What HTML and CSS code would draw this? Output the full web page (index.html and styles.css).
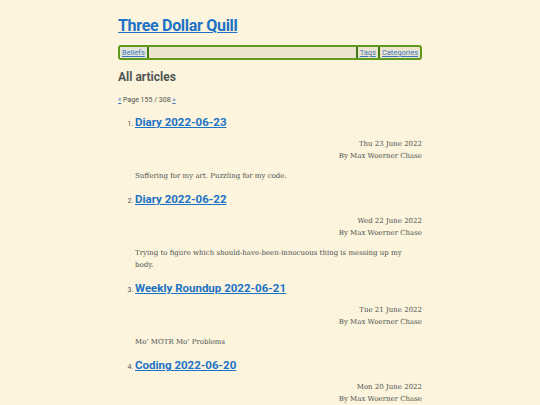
FILE: index.html
```html
<!DOCTYPE html>
<html>
<head>
<meta charset="utf-8">
<link rel="stylesheet" href="styles.css">
</head>
<body>
<div class="page">
  <header class="site-header">
    <h1 class="site-title"><a href="#">Three Dollar Quill</a></h1>
    <nav class="nav">
      <a class="nav-link nav-first" href="#">Beliefs</a>
      <span class="nav-spacer"></span>
      <a class="nav-link nav-sep" href="#">Tags</a>
      <a class="nav-link nav-sep" href="#">Categories</a>
    </nav>
  </header>
  <main>
    <h2 class="section-title">All articles</h2>
    <p class="pager"><a href="#">«</a> Page 155 / 308 <a href="#">»</a></p>
    <ol class="articles" start="1">
      <li class="article">
        <h3 class="article-title"><a href="#">Diary 2022-06-23</a></h3>
        <div class="meta">
          <div>Thu 23 June 2022</div>
          <div>By Max Woerner Chase</div>
        </div>
        <p class="summary">Suffering for my art. Puzzling for my code.</p>
      </li>
      <li class="article">
        <h3 class="article-title"><a href="#">Diary 2022-06-22</a></h3>
        <div class="meta">
          <div>Wed 22 June 2022</div>
          <div>By Max Woerner Chase</div>
        </div>
        <p class="summary">Trying to figure which should-have-been-innocuous thing is messing up my body.</p>
      </li>
      <li class="article">
        <h3 class="article-title"><a href="#">Weekly Roundup 2022-06-21</a></h3>
        <div class="meta">
          <div>Tue 21 June 2022</div>
          <div>By Max Woerner Chase</div>
        </div>
        <p class="summary">Mo’ MOTR Mo’ Problems</p>
      </li>
      <li class="article">
        <h3 class="article-title"><a href="#">Coding 2022-06-20</a></h3>
        <div class="meta">
          <div>Mon 20 June 2022</div>
          <div>By Max Woerner Chase</div>
        </div>
      </li>
    </ol>
  </main>
</div>
</body>
</html>
```

FILE: styles.css
```css
html, body {
  margin: 0;
  padding: 0;
  background: #fcf4dc;
}
body {
  font-family: "DejaVu Serif", serif;
  color: #4e5252;
}
.page {
  width: 304px;
  margin: 0 auto;
  padding-top: 15px;
}
.site-title {
  margin: 0;
  font-family: Roboto, sans-serif;
  font-size: 16px;
  letter-spacing: -0.3px;
  font-weight: 700;
  line-height: 22px;
}
.site-title a, .article-title a {
  color: #1b72c6;
}
.nav {
  display: flex;
  margin-top: 8px;
  height: 11px;
  border: 2px solid #5f9a1c;
  border-radius: 3px;
  background: #ece4cf;
  font-family: Roboto, sans-serif;
  font-size: 7.5px;
  line-height: 11px;
}
.nav-link {
  color: #3c78c0;
  padding: 0 2px;
}
.nav-first {
  background: #e3e4da;
  border-right: 2px solid #3f7a10;
}
.nav-sep {
  border-left: 2px solid #3f7a10;
}
.nav-spacer {
  flex: 1;
}
.section-title {
  margin: 9px 0 0;
  font-family: Roboto, sans-serif;
  font-weight: 700;
  font-size: 12px;
  line-height: 16px;
  color: #4f5656;
}
.pager {
  margin: 10px 0 0;
  font-family: Roboto, sans-serif;
  font-size: 7px;
  line-height: 10px;
}
.pager a {
  color: #3c78c0;
}
.articles {
  margin: 9px 0 0;
  padding-left: 17px;
  font-size: 7px;
}
.article {
  font-family: Roboto, sans-serif;
}
.article-title {
  margin: 0;
  font-size: 11.5px;
  line-height: 16px;
  font-weight: 700;
}
.meta {
  margin-top: 8px;
  text-align: right;
  font-family: "DejaVu Serif", serif;
  font-size: 7px;
  line-height: 12px;
}
.summary {
  margin: 8px 0 9px;
  font-family: "DejaVu Serif", serif;
  font-size: 7px;
  line-height: 12px;
}
```
